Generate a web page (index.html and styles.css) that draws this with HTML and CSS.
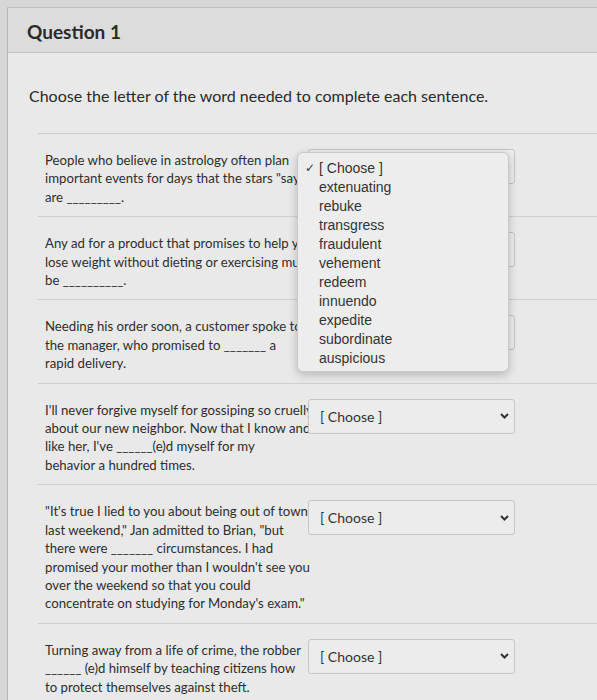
FILE: index.html
```html
<!DOCTYPE html>
<html lang="en">
<head>
<meta charset="utf-8">
<title>Question 1</title>
<link rel="stylesheet" href="styles.css">
</head>
<body>
<div class="card">
  <div class="header"><h2 class="title">Question 1</h2></div>
  <div class="content">
    <p class="instr">Choose the letter of the word needed to complete each sentence.</p>
    <div class="questions">
      <div class="row">
        <div class="qtext">People who believe in astrology often plan<br>important events for days that the stars "say"<br>are _________.</div>
        <div class="select">
          <span class="sel-label">[ Choose ]</span>
          <svg class="chev" width="9" height="6" viewBox="0 0 9 6"><polyline points="1,1 4.5,4.5 8,1" fill="none" stroke="#333" stroke-width="2"/></svg>
          <div class="popup">
            <div class="opt"><span class="check">✓</span>[ Choose ]</div>
            <div class="opt">extenuating</div>
            <div class="opt">rebuke</div>
            <div class="opt">transgress</div>
            <div class="opt">fraudulent</div>
            <div class="opt">vehement</div>
            <div class="opt">redeem</div>
            <div class="opt">innuendo</div>
            <div class="opt">expedite</div>
            <div class="opt">subordinate</div>
            <div class="opt">auspicious</div>
          </div>
        </div>
      </div>
      <div class="row">
        <div class="qtext">Any ad for a product that promises to help you<br>lose weight without dieting or exercising must<br>be __________.</div>
        <div class="select">
          <span class="sel-label">[ Choose ]</span>
          <svg class="chev" width="9" height="6" viewBox="0 0 9 6"><polyline points="1,1 4.5,4.5 8,1" fill="none" stroke="#333" stroke-width="2"/></svg>
        </div>
      </div>
      <div class="row">
        <div class="qtext">Needing his order soon, a customer spoke to<br>the manager, who promised to _______ a<br>rapid delivery.</div>
        <div class="select">
          <span class="sel-label">[ Choose ]</span>
          <svg class="chev" width="9" height="6" viewBox="0 0 9 6"><polyline points="1,1 4.5,4.5 8,1" fill="none" stroke="#333" stroke-width="2"/></svg>
        </div>
      </div>
      <div class="row">
        <div class="qtext">I'll never forgive myself for gossiping so cruelly<br>about our new neighbor. Now that I know and<br>like her, I've ______(e)d myself for my<br>behavior a hundred times.</div>
        <div class="select">
          <span class="sel-label">[ Choose ]</span>
          <svg class="chev" width="9" height="6" viewBox="0 0 9 6"><polyline points="1,1 4.5,4.5 8,1" fill="none" stroke="#333" stroke-width="2"/></svg>
        </div>
      </div>
      <div class="row">
        <div class="qtext">"It's true I lied to you about being out of town<br>last weekend," Jan admitted to Brian, "but<br>there were _______ circumstances. I had<br>promised your mother than I wouldn't see you<br>over the weekend so that you could<br>concentrate on studying for Monday's exam."</div>
        <div class="select">
          <span class="sel-label">[ Choose ]</span>
          <svg class="chev" width="9" height="6" viewBox="0 0 9 6"><polyline points="1,1 4.5,4.5 8,1" fill="none" stroke="#333" stroke-width="2"/></svg>
        </div>
      </div>
      <div class="row">
        <div class="qtext">Turning away from a life of crime, the robber<br>______ (e)d himself by teaching citizens how<br>to protect themselves against theft.</div>
        <div class="select">
          <span class="sel-label">[ Choose ]</span>
          <svg class="chev" width="9" height="6" viewBox="0 0 9 6"><polyline points="1,1 4.5,4.5 8,1" fill="none" stroke="#333" stroke-width="2"/></svg>
        </div>
      </div>
    </div>
  </div>
</div>
</body>
</html>
```

FILE: styles.css
```css
html, body {
  margin: 0;
  padding: 0;
}
body {
  background: #d6d6d6;
  padding: 7px 0 0 7px;
  overflow: hidden;
  height: 700px;
  box-sizing: border-box;
  font-family: Lato, "Liberation Sans", sans-serif;
  color: #2e2e2e;
}
.card {
  width: 640px;
  background: #e9e9e9;
  border-left: 1px solid #b8b8b8;
  border-top: 1px solid #c0c0c0;
  height: 720px;
}
.header {
  height: 45px;
  background: #dcdcdc;
  border-bottom: 1px solid #c2c2c2;
  display: flex;
  align-items: center;
  padding: 3px 0 0 19px;
  box-sizing: border-box;
}
.title {
  margin: 0;
  font-size: 19px;
  font-weight: 700;
  color: #2a2a2a;
}
.content {
  padding-left: 21px;
}
.instr {
  margin: 33px 0 0 0;
  font-size: 16px;
  line-height: 20px;
  color: #2a2a2a;
}
.questions {
  margin: 27px 0 0 9px;
}
.row {
  border-top: 1px solid #cfcfcf;
  display: flex;
  align-items: flex-start;
  padding: 17px 0 10px 7px;
}
.qtext {
  flex: 0 0 263px;
  width: 263px;
  min-width: 0;
  font-size: 13.2px;
  line-height: 18.4px;
  white-space: nowrap;
  color: #2e2e2e;
}
.select {
  position: relative;
  flex: 0 0 auto;
  width: 207px;
  height: 35px;
  margin-top: -2px;
  box-sizing: border-box;
  border: 1px solid #c6c6c6;
  border-radius: 3px;
  background: #ececec;
  display: flex;
  align-items: center;
  justify-content: space-between;
  padding: 0 5px 0 11px;
}
.sel-label {
  font-size: 14px;
  color: #333;
}
.chev {
  display: block;
}
.popup {
  position: absolute;
  left: -12px;
  top: 2px;
  width: 212px;
  padding: 6px 0 3px 0;
  box-sizing: border-box;
  background: #ededed;
  border: 1px solid #c9c9c9;
  border-radius: 6px;
  box-shadow: 0 3px 10px rgba(0, 0, 0, 0.22);
  font-family: "Liberation Sans", Arial, sans-serif;
  font-size: 14px;
  color: #333;
  z-index: 5;
}
.opt {
  height: 19px;
  line-height: 19px;
  padding-left: 21px;
  position: relative;
}
.check {
  position: absolute;
  left: 7px;
  top: 0;
  font-family: "DejaVu Sans", sans-serif;
  font-size: 12px;
}
```
